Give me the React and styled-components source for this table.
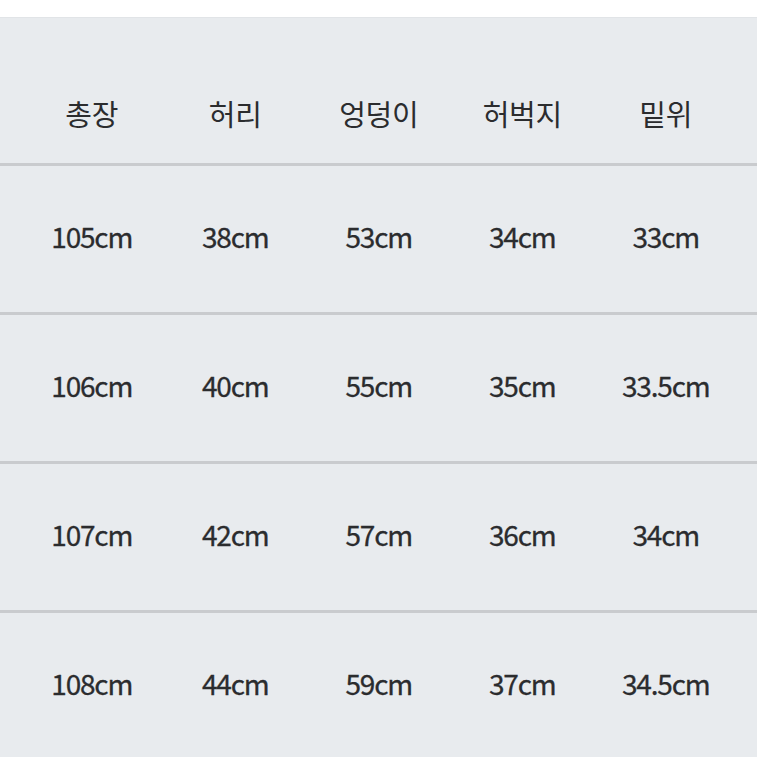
import React from 'react';
import { createGlobalStyle, styled } from 'styled-components';

const GlobalStyle = createGlobalStyle`
  html, body {
    margin: 0;
    padding: 0;
    background: #ffffff;
  }
  body {
    font-family: "Noto Sans CJK KR", "Noto Sans", sans-serif;
    color: #2b2c2e;
  }
`;

const headers = ['총장', '허리', '엉덩이', '허벅지', '밑위'];

const rows = [
  ['105cm', '38cm', '53cm', '34cm', '33cm'],
  ['106cm', '40cm', '55cm', '35cm', '33.5cm'],
  ['107cm', '42cm', '57cm', '36cm', '34cm'],
  ['108cm', '44cm', '59cm', '37cm', '34.5cm'],
];

function App() {
  return (
    <>
      <GlobalStyle />
      <Page>
        <Table>
          <HeadRow>
            {headers.map((h) => (
              <HeadCell key={h}>{h}</HeadCell>
            ))}
          </HeadRow>
          {rows.map((r, i) => (
            <Row key={i}>
              {r.map((v, j) => (
                <Cell key={j}>{v}</Cell>
              ))}
            </Row>
          ))}
        </Table>
      </Page>
    </>
  );
}

const Page = styled.div`
  padding-top: 17px;
  height: 757px;
  box-sizing: border-box;
  overflow: hidden;
`;

const Table = styled.div`
  background: #e8ebee;
  border-top: 1px solid #e1e4e7;
  min-height: 740px;
`;

const RowBase = styled.div`
  display: grid;
  grid-template-columns: repeat(5, 143.5px);
  padding: 0 20px;
  box-sizing: border-box;
`;

const HeadRow = styled(RowBase)`
  height: 145px;
  align-items: end;
  padding-bottom: 22px;
`;

const Row = styled(RowBase)`
  border-top: 3px solid #c9cbce;
  height: 149px;
  align-items: center;
  padding-bottom: 6px;
`;

const HeadCell = styled.div`
  text-align: center;
  font-size: 29px;
  line-height: 56px;
  letter-spacing: -0.3px;
`;

const Cell = styled.div`
  text-align: center;
  font-size: 28px;
  line-height: 40px;
  letter-spacing: -1.2px;
  -webkit-text-stroke: 0.3px #2b2c2e;
`;

export default App;
